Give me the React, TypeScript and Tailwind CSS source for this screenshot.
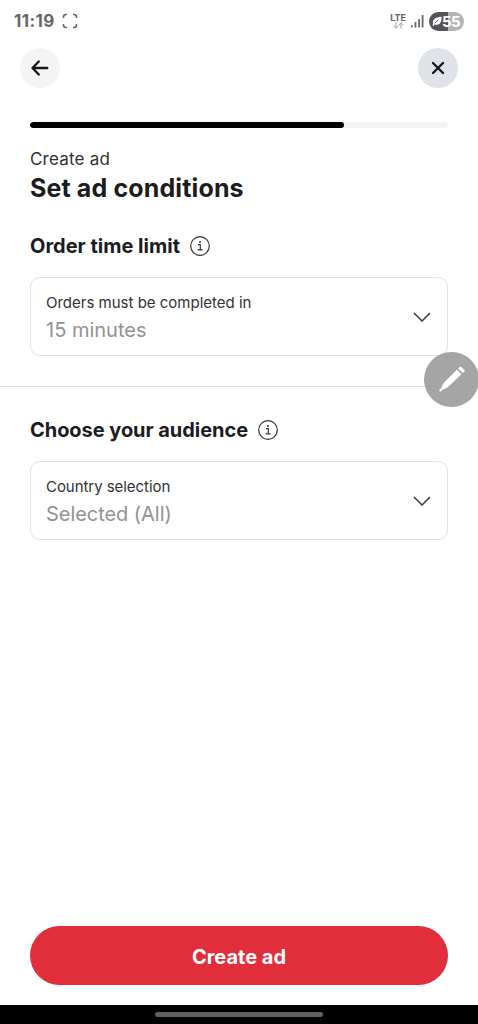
interface SelectFieldProps {
  label: string;
  value: string;
}

function StatusBar() {
  return (
    <div className="flex h-[42px] items-center justify-between pr-[14px] pl-[14px] text-[#666666]">
      <div className="flex items-center gap-[7px]">
        <span className="text-[17px] leading-5 font-bold tracking-[0.4px]">11:19</span>
        <svg className="h-4 w-4" viewBox="0 0 16 16" fill="none" stroke="currentColor" strokeWidth="1.6">
          <path d="M1.5 5V4Q1.5 1.5 4 1.5H5M11 1.5h1Q14.5 1.5 14.5 4v1M14.5 11v1q0 2.5-2.5 2.5h-1M5 14.5H4Q1.5 14.5 1.5 12v-1" />
        </svg>
      </div>
      <div className="flex items-center">
        <div className="flex w-4 flex-col items-center">
          <span className="text-[9px] leading-[9px] font-bold">LTE</span>
          <svg className="h-[7px] w-[11px]" viewBox="0 0 11 7" fill="none" stroke="#a3a3a3" strokeWidth="1">
            <path d="M3 .5v5.5M.5 3.8 3 6.2l2.2-2.4M8 6.5V1M5.8 3.2 8 .8l2.3 2.4" />
          </svg>
        </div>
        <svg className="ml-[5px] h-[14px] w-[13px]" viewBox="0 0 13 14" fill="currentColor">
          <rect x="0" y="11" width="1.6" height="2.5" rx=".5" />
          <rect x="3.6" y="8" width="1.8" height="5.5" rx=".5" />
          <rect x="7.2" y="5" width="1.8" height="8.5" rx=".5" />
          <rect x="10.7" y="1" width="1.8" height="12.5" rx=".5" />
        </svg>
        <div className="ml-[5px] flex h-[19px] w-[35px] items-center rounded-full bg-linear-to-r from-[#555555] from-55% to-[#b3b3b3] to-55% pl-[3px] text-white">
          <svg className="h-[10px] w-[10px] shrink-0" viewBox="0 0 10 10">
            <path d="M.5 9.6C.8 8.8 1 8.1 1.2 7.5.3 3.5 3 1 9.5.7 10 6.8 7 9.8 2.4 8.5L1.5 10Z" fill="white" />
            <path d="M2.7 7.2 6.4 4" stroke="#555555" strokeWidth=".9" />
          </svg>
          <span className="text-[15px] leading-[19px] font-bold tracking-[-0.7px]">55</span>
        </div>
      </div>
    </div>
  );
}

function InfoIcon() {
  return (
    <svg className="mb-px h-5 w-5" viewBox="0 0 20 20" fill="none" stroke="#33363b" strokeWidth="1.2">
      <circle cx="10" cy="10" r="9.3" />
      <path d="M8 8.7h2.3v5M7.7 13.9h5" />
      <circle cx="10" cy="6" r="1" fill="#33363b" stroke="none" />
    </svg>
  );
}

function SectionTitle({ children }: { children: string }) {
  return (
    <div className="flex h-6 items-center gap-[10px]">
      <h2 className="text-[20px] leading-6 font-bold">{children}</h2>
      <InfoIcon />
    </div>
  );
}

function SelectField({ label, value }: SelectFieldProps) {
  return (
    <button className="flex h-[79px] w-full items-center justify-between rounded-[10px] border border-[#e2e2e2] px-[15px] text-left">
      <span className="flex flex-col pt-px">
        <span className="text-[15px] leading-6 text-[#303236]">{label}</span>
        <span className="mt-px text-[20px] leading-7 text-[#929292]">{value}</span>
      </span>
      <svg className="mt-px mr-px h-[10px] w-[18px]" viewBox="0 0 18 10" fill="none" stroke="#37393d" strokeWidth="1.5">
        <path d="m1 1 8 8 8-8" />
      </svg>
    </button>
  );
}

export default function App() {
  return (
    <div className="relative flex h-[1024px] w-[478px] flex-col overflow-hidden bg-white font-['Inter',sans-serif] text-[#1a1c22]">
      <StatusBar />

      <header className="mt-[6px] flex justify-between px-5">
        <button aria-label="Back" className="flex h-10 w-10 items-center justify-center rounded-full bg-[#f4f4f4]">
          <svg className="h-[18px] w-[18px]" viewBox="0 0 18 18" fill="none" stroke="#15171c" strokeWidth="2.3" strokeLinecap="round" strokeLinejoin="round">
            <path d="M16.3 9H1.8M7.8 2.5 1.5 9l6.3 6.5" />
          </svg>
        </button>
        <button aria-label="Close" className="flex h-10 w-10 items-center justify-center rounded-full bg-[#dfe2e6]">
          <svg className="h-[14px] w-[14px]" viewBox="0 0 14 14" fill="none" stroke="#15171c" strokeWidth="2.3" strokeLinecap="round">
            <path d="m2 2 10 10M12 2 2 12" />
          </svg>
        </button>
      </header>

      <main className="flex-1">
        <div className="px-[30px] pt-[34px]">
          <div className="h-[6px] overflow-hidden rounded-full bg-[#f3f3f3]">
            <div className="h-full w-3/4 rounded-full bg-black" />
          </div>
          <p className="mt-[19px] text-[17px] leading-6 tracking-[0.2px] text-[#303236]">Create ad</p>
          <h1 className="mt-px text-[25px] leading-8 font-bold tracking-[0.13px]">Set ad conditions</h1>
        </div>

        <section className="mt-[30px] px-[30px]">
          <SectionTitle>Order time limit</SectionTitle>
          <div className="mt-[19px]">
            <SelectField label="Orders must be completed in" value="15 minutes" />
          </div>
        </section>

        <hr className="mt-[30px] border-[#e2e2e2]" />

        <section className="mt-[31px] px-[30px] tracking-[-0.05px]">
          <SectionTitle>Choose your audience</SectionTitle>
          <div className="mt-[19px]">
            <SelectField label="Country selection" value="Selected (All)" />
          </div>
        </section>
      </main>

      <footer className="px-[30px] pb-5">
        <button className="h-[59px] w-full rounded-full bg-[#e22e3a] pt-[2px] text-[20px] font-bold text-white">Create ad</button>
      </footer>
      <div className="flex h-[19px] items-center justify-center bg-black">
        <div className="h-[5px] w-[168px] rounded-full bg-[#606060]" />
      </div>

      {/* floating edit handle, slightly see-through */}
      <button aria-label="Edit" className="absolute top-[352px] -right-px flex h-[55px] w-[55px] items-center justify-center rounded-full bg-[#9b9b9b]/90">
        <svg className="mb-[2px] h-7 w-7" viewBox="0 0 28 28" fill="white">
          <path d="M19 4.8 23.4 9.2 10.6 21.6Q7.8 23.8 4.4 24.7L2.9 26.4Q1 27 1.3 25.1L2.9 23.6Q3.8 20 6.1 17.4Z" />
          <path d="m20.2 3.6 1.6-1.7q.8-.6 1.6.1l3 3q.7.8 0 1.6l-1.8 1.5Z" />
        </svg>
      </button>
    </div>
  );
}
